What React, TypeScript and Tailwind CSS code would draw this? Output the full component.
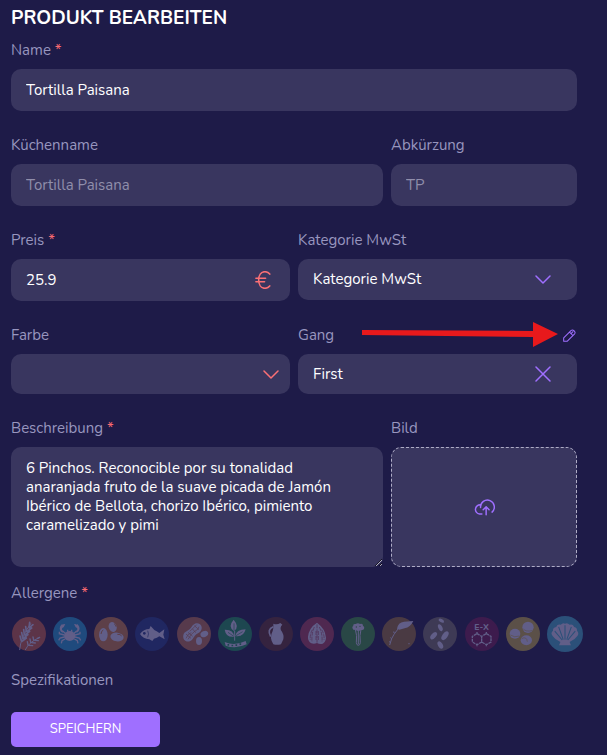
import type { ReactNode } from "react";
import clsx from "clsx";

const field =
  "block w-full rounded-[10px] bg-[#39365f] px-[15px] text-[15px] text-white outline-none placeholder:text-[#908eab]";

type LabelProps = { htmlFor?: string; required?: boolean; children: ReactNode };

function Label({ htmlFor, required, children }: LabelProps) {
  return (
    <label htmlFor={htmlFor} className="block text-[15px] leading-6 text-[#9896bf]">
      {children}
      {required && <span className="text-[#fb6a70]"> *</span>}
    </label>
  );
}

function Chevron() {
  return (
    <svg viewBox="0 0 16 9" className="h-[9px] w-4" fill="none" stroke="currentColor" strokeWidth="1.5" strokeLinecap="round" strokeLinejoin="round">
      <path d="M1 1l7 7 7-7" />
    </svg>
  );
}

function Euro() {
  return (
    <svg viewBox="0 0 45 52" className="h-[18px] w-4" fill="none" stroke="currentColor" strokeWidth="4.5" strokeLinecap="round">
      <path d="M42 9Q36 2 28 2C16 2 10 13 10 26s6 24 18 24q8 0 14-7M2 21h28M2 31h25" />
    </svg>
  );
}

function Pencil() {
  return (
    <svg viewBox="0 0 38 38" className="h-[13px] w-[13px]" fill="none" stroke="currentColor" strokeWidth="3" strokeLinejoin="round" strokeLinecap="round">
      <path d="M2 36V26L24 4q4-3 8 1l1 1q4 4 1 8L12 36zM19 9l10 10M25 12l4-4" />
    </svg>
  );
}

function CloudUpload() {
  return (
    <svg viewBox="0 0 64 50" className="h-[17px] w-[21px]" fill="none" stroke="currentColor" strokeWidth="4.5" strokeLinecap="round" strokeLinejoin="round">
      <path d="M24 45h-7a14 14 0 1 1 3-28M20 25a21 21 0 1 1 35 14M37 47V24M28 32l9-9 9 9" />
    </svg>
  );
}

type Allergen = { name: string; bg: string; art: ReactNode; large?: boolean };

// every drawing sits in a 102 x 102 box
const allergens: Allergen[] = [
  {
    name: "Gluten",
    bg: "#5c3448",
    art: (
      <g fill="none" stroke="currentColor" strokeLinecap="round">
        <path strokeWidth="3" d="M23 98q2-35 33-78M40 98q12-24 42-36" />
        <path strokeWidth="5" d="M28 71l-4-14M32 62l-3-15M37 53l-2-15M43 43l-2-14M51 32l2-16M30 73l13-10M34 64l14-11M39 54l14-11M45 43l14-10M52 32l11-9" />
        <path strokeWidth="4" d="M48 84l-2-10M56 76l-2-10M65 69l-2-9M51 85l11 1M59 77l11 1M68 70l11 1M76 64l7-3" />
      </g>
    ),
  },
  {
    name: "Krebstiere",
    bg: "#1f4a7d",
    art: (
      <g fill="currentColor">
        <ellipse cx="50" cy="57" rx="17" ry="15" />
        <path d="M37 21c-18 1-23 19-8 26l3-5c-8-4-6-9 0-11zM63 21c18 1 23 19 8 26l-3-5c8-4 6-9 0-11zM28 21c-9 6-9 15-3 20l3-8zM72 21c9 6 9 15 3 20l-3-8z" />
        <path d="M30 43l8 7M70 43l-8 7M44 44v-6M56 44v-6M34 54l-15-4v-6M66 54l15-4v-6M34 60l-13 3-4 7M66 60l13 3 4 7M36 66l-9 5-2 8M64 66l9 5 2 8" fill="none" stroke="currentColor" strokeWidth="4" />
      </g>
    ),
  },
  {
    name: "Eier",
    bg: "#5d3f48",
    art: (
      <g fill="currentColor">
        <ellipse cx="28" cy="53" rx="13" ry="20" />
        <ellipse cx="56" cy="30" rx="12" ry="15" transform="rotate(-20 56 30)" />
        <ellipse cx="69" cy="60" rx="20" ry="13" transform="rotate(8 69 60)" />
        <path d="M21 51q1-10 7-12M60 20q6 3 6 9M70 52q9-1 13 5" fill="none" stroke="#5d3f48" strokeWidth="3" />
      </g>
    ),
  },
  {
    name: "Fisch",
    bg: "#202761",
    art: (
      <g fill="currentColor">
        <path d="M15 51q11-15 28-15l4-9 11 12q9 4 15 9l15-11-3 16 4 14-16-9q-7 6-16 7l-5 7-9-5Q24 66 15 51z" />
        <circle cx="28" cy="49" r="4" fill="#202761" />
        <path d="M38 41q5 9 0 20" fill="none" stroke="#202761" strokeWidth="2" />
      </g>
    ),
  },
  {
    name: "Erdnüsse",
    bg: "#573a4c",
    art: (
      <g>
        <path d="M24 46c7-6 12-6 18-14 7-13 18-17 27-10 9 8 6 21-6 27-8 4-10 9-16 17-7 9-18 10-24 4s-6-18 1-24z" fill="currentColor" />
        <path d="M27 64q5-14 16-17M33 67q10-17 19-23 14-7 14-15M38 43q14-12 21-20M27 51l15 13M33 46l14 12M46 35l10 12M52 26l14 12" fill="none" stroke="#573a4c" strokeWidth="2" />
        <ellipse cx="66" cy="72" rx="9" ry="12" fill="currentColor" />
        <ellipse cx="82" cy="51" rx="12" ry="9" transform="rotate(-25 82 51)" fill="currentColor" />
      </g>
    ),
  },
  {
    name: "Soja",
    bg: "#1d4750",
    art: (
      <g fill="currentColor">
        <path d="M47 8q19 22 1 34-20-13-1-34zM20 38q27-1 28 21-24 3-28-21zM83 37q-28 0-31 20 25 4 31-20z" />
        <path d="M48 19v20M30 46l16 11M74 44L54 56" fill="none" stroke="#1d4750" strokeWidth="2" />
        <path d="M50 42v29" fill="none" stroke="currentColor" strokeWidth="3" />
        <path d="M20 75q30 13 63-3l3 10q-32 15-63 4z" />
        <path d="M31 81v5M43 83v5M55 82v5M67 79v5" fill="none" stroke="#1d4750" strokeWidth="5" />
      </g>
    ),
  },
  {
    name: "Milch",
    bg: "#35233f",
    art: (
      <g fill="currentColor">
        <path d="M43 20q11 5 21-2l6 5q-8 8-4 17 10 13 7 27l-7 15q-12 3-23 0-13-20-2-40 3-10 2-22z" />
        <path d="M43 29q-20 8-8 30" fill="none" stroke="currentColor" strokeWidth="5" />
      </g>
    ),
  },
  {
    name: "Schalenfrüchte",
    bg: "#4f2850",
    art: (
      <g fill="currentColor">
        <path d="M51 17q25 18 27 45-1 13-10 18-9 2-17-2-9 4-17 1-11-7-10-20 3-27 27-42z" />
        <path d="M51 22v55M43 30q-9 20-7 45M37 38q-8 15-6 31M58 30q10 21 8 45M65 38q9 15 7 31M48 42v29M55 42v29" fill="none" stroke="#4f2850" strokeWidth="2" strokeDasharray="12 3" />
      </g>
    ),
  },
  {
    name: "Sellerie",
    bg: "#294746",
    art: (
      <g fill="currentColor">
        <path d="M37 38q-6-8 0-11-2-7 7-6 7-5 13 0 9-3 9 5 7 5 1 12l-8 2q-8 4-15-1z" />
        <circle cx="46" cy="30" r="2" fill="#294746" />
        <circle cx="57" cy="28" r="2" fill="#294746" />
        <path d="M43 37q6 18 3 40 1 8 6 8t6-8q-3-22 2-40M52 40v42" fill="none" stroke="currentColor" strokeWidth="3" />
      </g>
    ),
  },
  {
    name: "Senf",
    bg: "#4a3a43",
    art: (
      <g fill="currentColor">
        <path d="M45 35q3-19 21-21l28-2q-9 19-26 22l-16 4z" />
        <path d="M48 36q-14 17-19 29l-6 19" fill="none" stroke="currentColor" strokeWidth="3" />
        <path d="M38 46l-5-1M29 65l-4-3M26 76l-5-2" fill="none" stroke="currentColor" strokeWidth="3" />
        <circle cx="81" cy="80" r="2" />
      </g>
    ),
  },
  {
    name: "Sesam",
    bg: "#3e3a55",
    art: (
      <g fill="currentColor">
        <ellipse cx="55" cy="11" rx="9" ry="5" transform="rotate(30 55 11)" />
        <ellipse cx="52" cy="32" rx="6" ry="11" transform="rotate(-25 52 32)" />
        <ellipse cx="32" cy="56" rx="7" ry="13" transform="rotate(42 32 56)" />
        <ellipse cx="66" cy="56" rx="8" ry="15" transform="rotate(35 66 56)" />
        <ellipse cx="52" cy="84" rx="7" ry="12" transform="rotate(-30 52 84)" />
      </g>
    ),
  },
  {
    name: "Zusatzstoffe",
    bg: "#3d1b4d",
    art: (
      <g>
        <text x="50" y="38" textAnchor="middle" fontSize="26" fontWeight="800" fill="currentColor">
          E-X
        </text>
        <path d="M36 50l14 8v17l-14 8-14-8V58zM64 50l14 8v17l-14 8-14-8V58zM36 50v-5M64 50v-5M36 83v5M64 83v5" fill="none" stroke="currentColor" strokeWidth="4" strokeDasharray="9 2" />
      </g>
    ),
  },
  {
    name: "Lupinen",
    bg: "#5b5048",
    art: (
      <g fill="currentColor">
        <ellipse cx="27" cy="50" rx="16" ry="15" />
        <ellipse cx="66" cy="31" rx="17" ry="17" />
        <ellipse cx="61" cy="70" rx="17" ry="15" />
        <path d="M13 54q13 9 27 3M52 36q8 9 26 5M47 65q15-8 17 9" fill="none" stroke="#5b5048" strokeWidth="2" />
      </g>
    ),
  },
  {
    name: "Weichtiere",
    bg: "#2b5079",
    large: true,
    art: (
      <g fill="currentColor">
        <path d="M38 74Q23 68 16 57q-7-9 1-15-1-10 9-11 4-9 13-6 6-7 12-3 7-4 13 3 9-3 13 6 9 2 8 11 7 7 1 15-7 11-22 17l4 9H34z" />
        <path d="M43 68L22 43M46 67L33 31M51 67V26M56 67l13-36M59 68l21-25" fill="none" stroke="#2b5079" strokeWidth="3" />
      </g>
    ),
  },
];

export default function App() {
  return (
    <main className="min-h-screen bg-[#1e1b48] pt-1 pr-[30px] pb-2 pl-[11px] font-[Nunito,Lato,sans-serif]">
      <form onSubmit={(e) => e.preventDefault()}>
        <h1 className="text-[19px] leading-7 font-bold text-white">PRODUKT BEARBEITEN</h1>

        <div className="mt-1.5 flex flex-col gap-[22px]">
          <div className="flex flex-col gap-[7px]">
            <Label htmlFor="name" required>Name</Label>
            <input id="name" className={clsx(field, "h-[42px]")} defaultValue="Tortilla Paisana" />
          </div>

          <div className="grid grid-cols-[2fr_1fr] gap-2">
            <div className="flex flex-col gap-[7px]">
              <Label htmlFor="kitchen">Küchenname</Label>
              <input id="kitchen" className={clsx(field, "h-[42px]")} placeholder="Tortilla Paisana" />
            </div>
            <div className="flex flex-col gap-[7px]">
              <Label htmlFor="short">Abkürzung</Label>
              <input id="short" className={clsx(field, "h-[42px]")} placeholder="TP" />
            </div>
          </div>

          <div className="grid grid-cols-2 gap-2">
            <div className="flex flex-col gap-[7px]">
              <Label htmlFor="price" required>Preis</Label>
              <div className="relative">
                <input id="price" className={clsx(field, "h-[42px]")} defaultValue="25.9" />
                <span className="pointer-events-none absolute inset-y-0 right-[19px] flex items-center text-[#fb7075]">
                  <Euro />
                </span>
              </div>
            </div>
            <div className="flex flex-col gap-[7px]">
              <Label htmlFor="tax">Kategorie MwSt</Label>
              <div className="relative">
                <select id="tax" className={clsx(field, "h-[41px] appearance-none")}>
                  <option>Kategorie MwSt</option>
                </select>
                <span className="pointer-events-none absolute inset-y-0 right-[26px] flex items-center text-[#9f6fff]">
                  <Chevron />
                </span>
              </div>
            </div>
          </div>

          <div className="grid grid-cols-2 gap-2">
            <div className="flex flex-col gap-[7px]">
              <Label htmlFor="color">Farbe</Label>
              <div className="relative">
                <select id="color" className={clsx(field, "h-10 appearance-none")}>
                  <option></option>
                </select>
                <span className="pointer-events-none absolute inset-y-0 right-[11px] flex items-center text-[#fb7075]">
                  <Chevron />
                </span>
              </div>
            </div>
            <div className="flex flex-col gap-[7px]">
              <div className="relative flex items-center justify-between">
                <Label htmlFor="course">Gang</Label>
                <button type="button" aria-label="Gang bearbeiten" className="pr-px text-[#9f6fff]">
                  <Pencil />
                </button>
                <svg viewBox="0 0 196 26" className="pointer-events-none absolute right-[19px] h-[26px] w-[196px]" fill="#e8191c">
                  <path d="M0 8l171 1V0l25 12-25 13V15L0 13z" />
                </svg>
              </div>
              <div className="relative">
                <select id="course" className={clsx(field, "h-10 appearance-none")}>
                  <option>First</option>
                </select>
                <button type="button" aria-label="Auswahl löschen" className="absolute inset-y-0 right-[26px] flex items-center text-[#9f6fff]">
                  <svg viewBox="0 0 16 16" className="h-4 w-4" fill="none" stroke="currentColor" strokeWidth="1.5" strokeLinecap="round">
                    <path d="M1 1l14 14M15 1L1 15" />
                  </svg>
                </button>
              </div>
            </div>
          </div>

          <div className="grid grid-cols-[2fr_1fr] gap-2">
            <div className="flex flex-col gap-[7px]">
              <Label htmlFor="description" required>Beschreibung</Label>
              <textarea
                id="description"
                className={clsx(field, "h-[120px] resize py-3 leading-[19px]")}
                defaultValue="6 Pinchos. Reconocible por su tonalidad anaranjada fruto de la suave picada de Jamón Ibérico de Bellota, chorizo Ibérico, pimiento caramelizado y pimi"
              />
            </div>
            <div className="flex flex-col gap-[7px]">
              <Label htmlFor="image">Bild</Label>
              <button
                id="image"
                type="button"
                aria-label="Bild hochladen"
                className="flex h-[120px] items-center justify-center rounded-[10px] border border-dashed border-[#aeacc6] bg-[#39365f] text-[#9f6fff]"
              >
                <CloudUpload />
              </button>
            </div>
          </div>
        </div>

        <div className="mt-[14px]">
          <Label required>Allergene</Label>
          <div className="mt-[11px] -mr-1.5 ml-px flex items-center justify-between">
            {allergens.map((a) => (
              <button
                key={a.name}
                type="button"
                aria-label={a.name}
                className={clsx("shrink-0 text-[#615e88]", a.large ? "h-9 w-9" : "h-[34px] w-[34px]")}
              >
                <svg viewBox="0 0 102 102" className="h-full w-full">
                  <circle cx="51" cy="51" r="51" fill={a.bg} />
                  {a.art}
                </svg>
              </button>
            ))}
          </div>
        </div>

        <div className="mt-4">
          <Label>Spezifikationen</Label>
        </div>

        <button type="submit" className="mt-5 h-[35px] w-[149px] rounded-[5px] bg-[#9f6fff] text-[13px] text-white">
          SPEICHERN
        </button>
      </form>
    </main>
  );
}
